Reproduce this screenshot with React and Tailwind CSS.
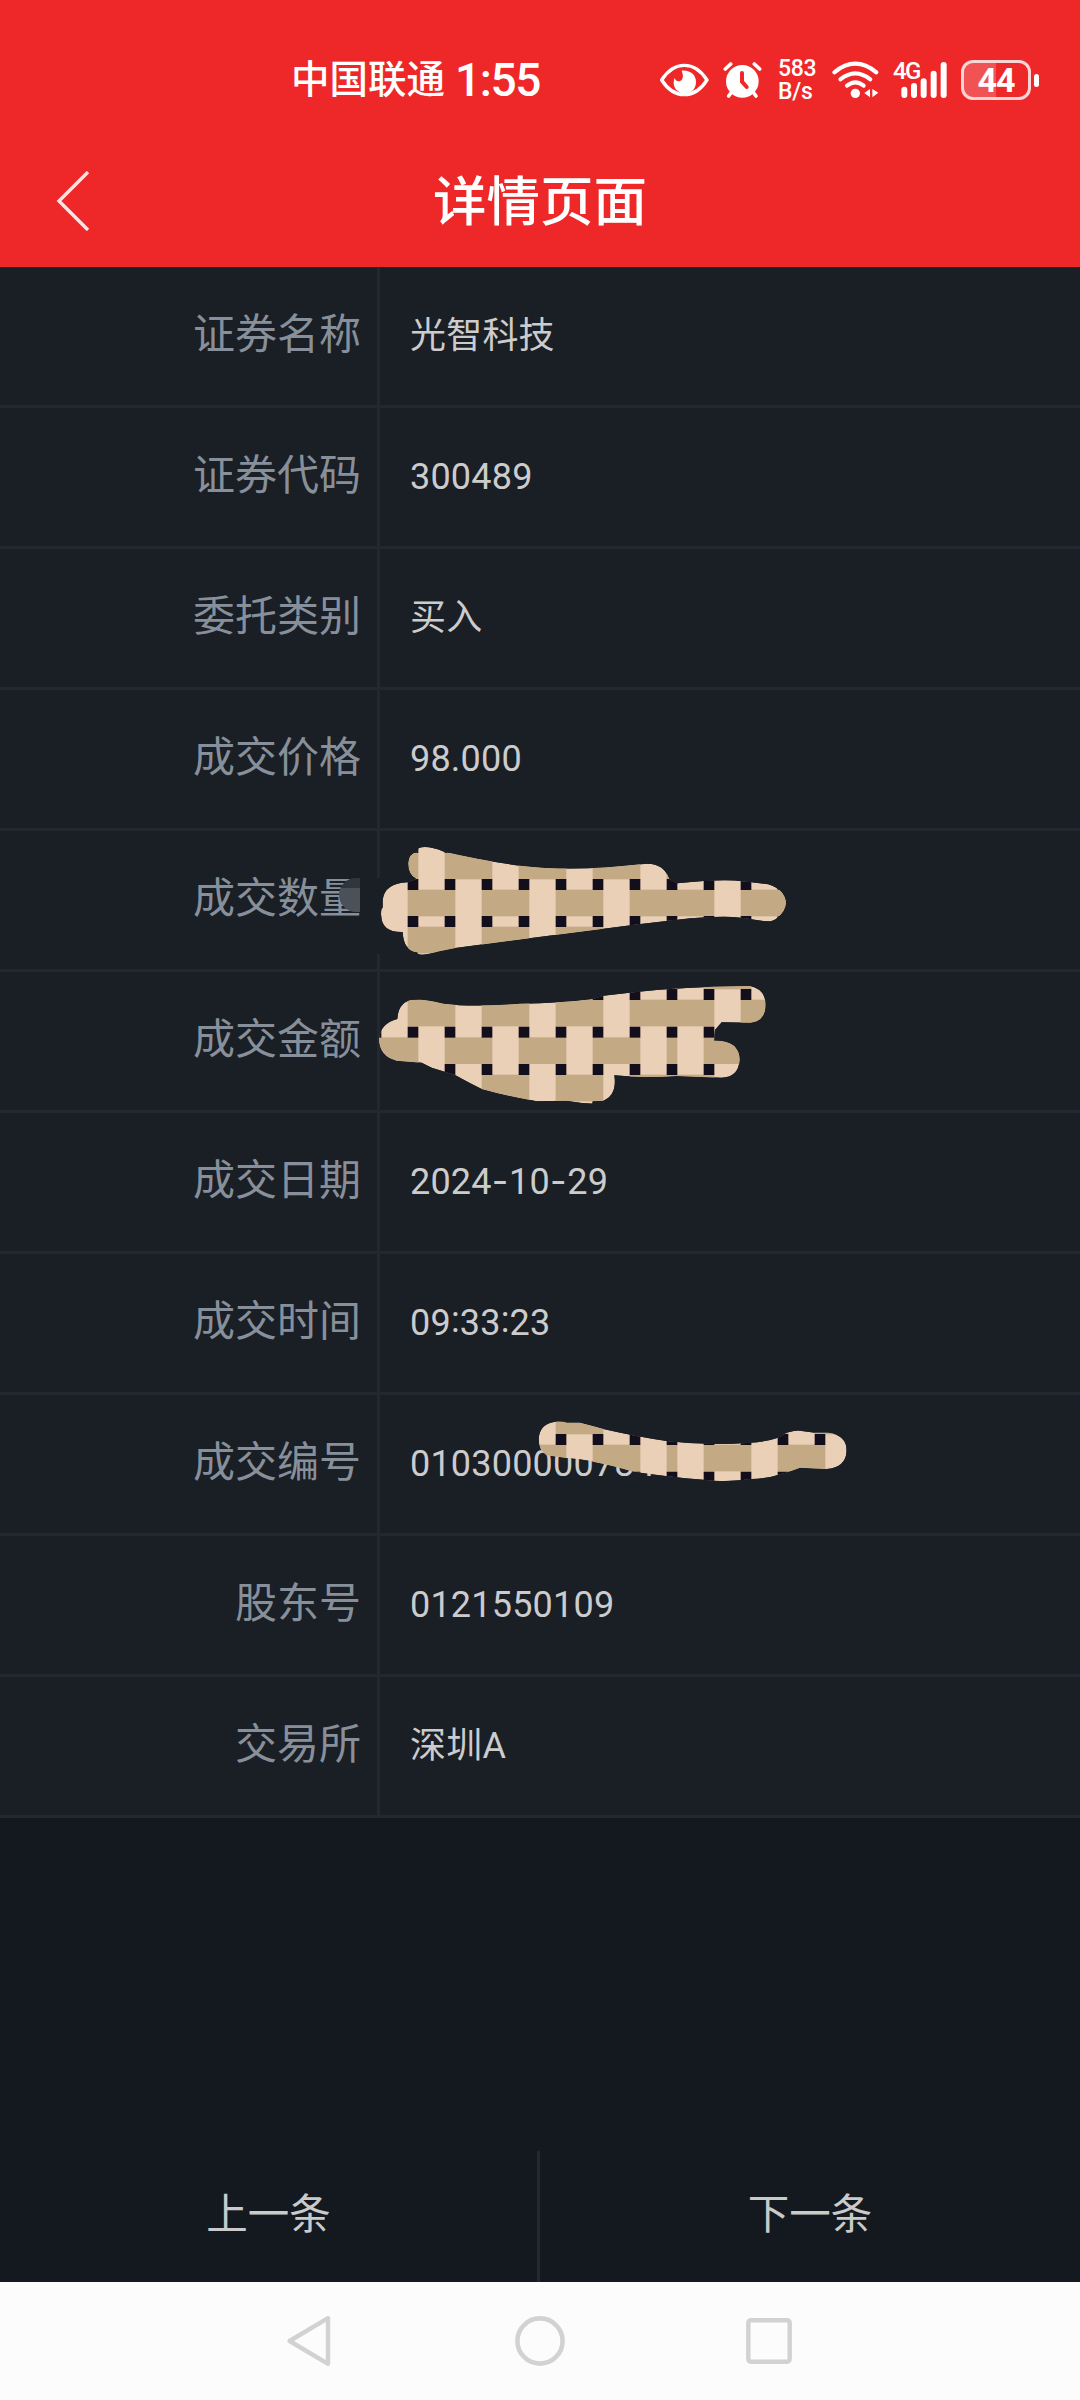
import React from 'react';

const rows = [
  { label: '证券名称', value: '光智科技' },
  { label: '证券代码', value: '300489' },
  { label: '委托类别', value: '买入' },
  { label: '成交价格', value: '98.000' },
  { label: '成交数量', value: '', cover: 'amount', smudge: true },
  { label: '成交金额', value: '', cover: 'money' },
  { label: '成交日期', value: '2024-10-29' },
  { label: '成交时间', value: '09:33:23' },
  { label: '成交编号', value: '010300000784', cover: 'serial' },
  { label: '股东号', value: '0121550109' },
  { label: '交易所', value: '深圳A' }
];

// Brush strokes that hide private values, three units to a pixel.
// bands: top of each row of knots, and which columns show the upright strip
const covers = {
  amount: {
    viewBox: '60 33 1350 414',
    path: 'M175 85 Q200 74 252 95 Q370 122 480 137 Q640 156 842 133 Q908 122 928 177 L952 190 Q1090 175 1150 184 L1225 193 Q1276 210 1278 250 Q1275 275 1255 290 Q1240 308 1210 303 L1142 293 Q1080 286 952 299 L842 312 L508 355 L286 384 Q230 395 205 402 Q185 406 175 403 L172 397 Q130 392 128 336 Q62 338 63 280 Q63 268 68 262 L68 240 Q74 190 142 187 L170 177 Q145 165 145 130 Q147 100 172 97 Z',
    bands: [[66, 0], [177, 1], [288, 1]]
  },
  money: {
    viewBox: '60 36 1350 414',
    path: 'M112 177 Q115 120 165 119 Q185 117 250 131 Q340 142 480 131 Q600 130 698 117 L730 107 Q900 85 1060 80 L1170 78 Q1217 88 1217 135 Q1215 185 1170 188 L1085 187 L1065 210 L1062 242 Q1138 240 1139 300 Q1135 352 1085 353 L950 348 Q850 355 763 346 Q772 405 730 422 L698 424 L697 431 L665 429 L620 422 L530 424 Q440 408 365 387 Q330 370 285 345 L215 323 L185 308 L110 302 Q58 290 57 235 Q62 190 112 177 Z',
    bands: [[-24, 0], [87, 1], [200, 0], [312, 1]]
  },
  serial: {
    viewBox: '60 45 1350 414',
    path: 'M586 125 Q610 124 620 128 L660 128 Q700 138 730 147 Q830 170 920 183 Q1040 198 1170 188 Q1220 185 1254 173 Q1290 150 1320 152 L1365 158 L1405 158 Q1460 165 1460 212 Q1458 262 1400 267 L1320 263 Q1290 275 1254 285 Q1220 296 1174 297 Q1080 308 1030 299 Q920 290 820 275 Q700 240 620 234 L560 226 Q535 210 536 175 Q540 130 586 125 Z',
    bands: [[51, 1], [162, 0], [275, 1]]
  }
};

const columns = Array.from({ length: 14 }, (_, i) => i - 1);

const Cover = ({ name }) => {
  const { viewBox, path, bands } = covers[name];

  // the texture starts over at the eighth knot
  const isUpright = (col, shift) => (col >= 7 ? col + 1 : col) % 2 === shift || (col === -1 && shift === 1);

  return (
    <svg
      viewBox={viewBox}
      className="absolute left-0 top-0 w-[450px] h-[138px] overflow-visible"
    >
      <clipPath id={`cover-${name}`}>
        <path d={path} />
      </clipPath>
      <g clipPath={`url(#cover-${name})`}>
        <path d={path} fill="#ead0b6" />
        {bands.map(([top, shift]) => (
          <g key={top}>
            {columns.map(col => {
              const x = 143 + col * 111;
              return (
                <g key={col}>
                  <rect x={x} y={top + 32} width="32" height="80" fill="#c4aa84" />
                  {!isUpright(col, shift) && (
                    <rect x={x + 31} y={top + 32} width="81" height="80" fill="#c4aa84" />
                  )}
                  <rect x={x} y={top} width="32" height="33" fill="#120e1c" />
                </g>
              );
            })}
          </g>
        ))}
      </g>
    </svg>
  );
};

const EyeIcon = () => (
  <svg viewBox="57 60 147 120" className="w-[49px] h-[40px]" fill="none">
    <path d="M62 120 Q90 76 130 76 Q170 76 198 120 Q170 164 130 164 Q90 164 62 120 Z" stroke="#fff" strokeWidth="10" strokeLinejoin="round" />
    <path d="M122 92 C150 90 165 106 165 126 C165 148 150 160 131 160 C112 160 98 146 98 128 Q98 120 101 114 Q106 127 117 123 Q132 116 122 92 Z" fill="#fff" />
  </svg>
);

const AlarmIcon = () => (
  <svg viewBox="246 60 117 120" className="w-[39px] h-[40px]" fill="none" stroke="#fff" strokeLinecap="round">
    <circle cx="304" cy="124" r="49" fill="#fff" stroke="none" />
    <path d="M253 87 L269 72 M340 72 L356 87" strokeWidth="11" />
    <path d="M272 156 L263 168 M336 156 L345 168" strokeWidth="11" />
    <path d="M303 99 V125 L317 141" stroke="#ee2828" strokeWidth="12" />
  </svg>
);

const WifiIcon = () => (
  <svg viewBox="576 60 141 120" className="w-[47px] h-[40px]" fill="none" stroke="#fff" strokeWidth="12" strokeLinecap="round">
    <path d="M583 97 Q646 45 709 97" />
    <path d="M601 118 Q646 82 691 118" />
    <path d="M621 137 Q646 117 671 137" />
    <circle cx="646" cy="160" r="14" fill="#fff" stroke="none" />
    <path d="M690 147 V172 L673 159 Z M697 147 V172 L715 158 Z" fill="#fff" stroke="none" />
  </svg>
);

const SignalIcon = () => (
  <svg viewBox="759 60 162 120" className="w-[54px] h-[40px]" stroke="#fff" strokeWidth="18" strokeLinecap="round">
    <path d="M793 149 V165 M822 138 V165 M851 124 V165 M881 101 V165 M911 75 V165" />
  </svg>
);

const StatusBar = () => (
  <div className="flex h-[134px] items-center justify-between pt-[26px] pl-[291px] pr-[41px] text-white font-medium">
    <div className="flex items-center leading-none">
      <span className="text-[38.5px]">中国联通</span>
      <span className="ml-[10px] text-[46px] tracking-[-1.4px]">1:55</span>
    </div>
    <div className="flex items-center">
      <EyeIcon />
      <div className="ml-[14px]"><AlarmIcon /></div>
      <div className="ml-[16px] flex w-[40px] flex-col text-[23px] leading-[23px] tracking-[-0.3px]">
        <span>583</span>
        <span>B/s</span>
      </div>
      <div className="ml-[14px]"><WifiIcon /></div>
      <div className="relative ml-[14px]">
        <SignalIcon />
        <span className="absolute left-0 top-0 text-[24px] leading-[23px] tracking-[-1.6px]">4G</span>
      </div>
      <div className="ml-[14px] flex items-center gap-[3px]">
        <div className="flex h-[40px] w-[70px] items-center justify-center rounded-[12px] border-[3px] border-[#fbd5d5] bg-[linear-gradient(to_right,#f15354_50%,transparent_50%)] text-[34px] font-bold leading-none tracking-[-1px]">
          44
        </div>
        <div className="h-[13px] w-[5px] rounded-full bg-white"></div>
      </div>
    </div>
  </div>
);

const TitleBar = () => (
  <div className="grid h-[133px] grid-cols-[120px_1fr_120px] items-center">
    <button className="pl-[56px]">
      <svg viewBox="0 0 34 60" className="h-[60px] w-[34px]" fill="none" stroke="#fde3e3" strokeWidth="3.4">
        <path d="M32 1 L3 30 L32 59" />
      </svg>
    </button>
    <h1 className="pt-[4px] text-center text-[53.5px] font-medium leading-none text-white">详情页面</h1>
  </div>
);

const Value = ({ text }) => (
  <span className="tracking-[0.2px]">
    {text.split(/([-:])/).map((part, index) => {
      if (part === '-') {
        return <span key={index} className="font-['Inter'] tracking-[0.8px]">-</span>;
      }
      if (part === ':') {
        return <span key={index} className="inline-block -translate-y-[3px]">:</span>;
      }
      return part;
    })}
  </span>
);

const DetailRow = ({ row }) => (
  <div className="flex h-[141px] border-b-[3px] border-[#23272f] bg-[#1a1e25]">
    <div className="relative flex w-[380px] items-center justify-end border-r-[3px] border-[#23272f] pr-[16px] pb-[3px] text-[42px] leading-none text-[#87909a]">
      {row.label}
      {row.smudge && (
        <>
          <div className="absolute right-[17px] top-[47px] h-[34px] w-[21px] rounded-l-full bg-[linear-gradient(#2f363e_10px,#4b5158_10px)]"></div>
          <div className="absolute -right-[3px] top-[47px] h-[76px] w-[17px] bg-[#1a1e25]"></div>
        </>
      )}
    </div>
    <div className="relative flex flex-1 items-center pl-[30px] pb-px text-[36px] leading-none text-[#cccccd]">
      <Value text={row.value} />
      {row.cover && <Cover name={row.cover} />}
    </div>
  </div>
);

const NavBar = () => (
  <div className="flex h-[118px] items-center justify-center gap-[181px] bg-[#fcfcfc]">
    <svg viewBox="0 0 46 52" className="h-[52px] w-[46px] overflow-visible" fill="none" stroke="#d2d2d2" strokeWidth="4.4" strokeLinejoin="round">
      <path d="M40 3.2 V48.8 L1.6 26 Z" />
    </svg>
    <svg viewBox="0 0 50 50" className="h-[50px] w-[50px]" fill="none" stroke="#d2d2d2" strokeWidth="4.6">
      <circle cx="25" cy="25" r="22.6" />
    </svg>
    <svg viewBox="0 0 46 46" className="h-[46px] w-[46px]" fill="none" stroke="#d2d2d2" strokeWidth="4.4">
      <rect x="2.3" y="2.3" width="41.4" height="41.4" rx="2.5" />
    </svg>
  </div>
);

const App = () => {
  return (
    <div className="flex h-[2400px] w-[1080px] flex-col overflow-hidden bg-[#141920] font-['Roboto','Noto_Sans_CJK_SC',sans-serif]">
      <header className="bg-[#ee2828]">
        <StatusBar />
        <TitleBar />
      </header>

      <main className="flex-1">
        {rows.map(row => (
          <DetailRow key={row.label} row={row} />
        ))}
      </main>

      <div className="flex h-[131px] text-[41.5px] leading-none text-[#cacaca]">
        <button className="w-[540px] border-r-[3px] border-[#23272f] pb-[3px]">上一条</button>
        <button className="flex-1 pb-[3px]">下一条</button>
      </div>

      <NavBar />
    </div>
  );
};

export default App;
